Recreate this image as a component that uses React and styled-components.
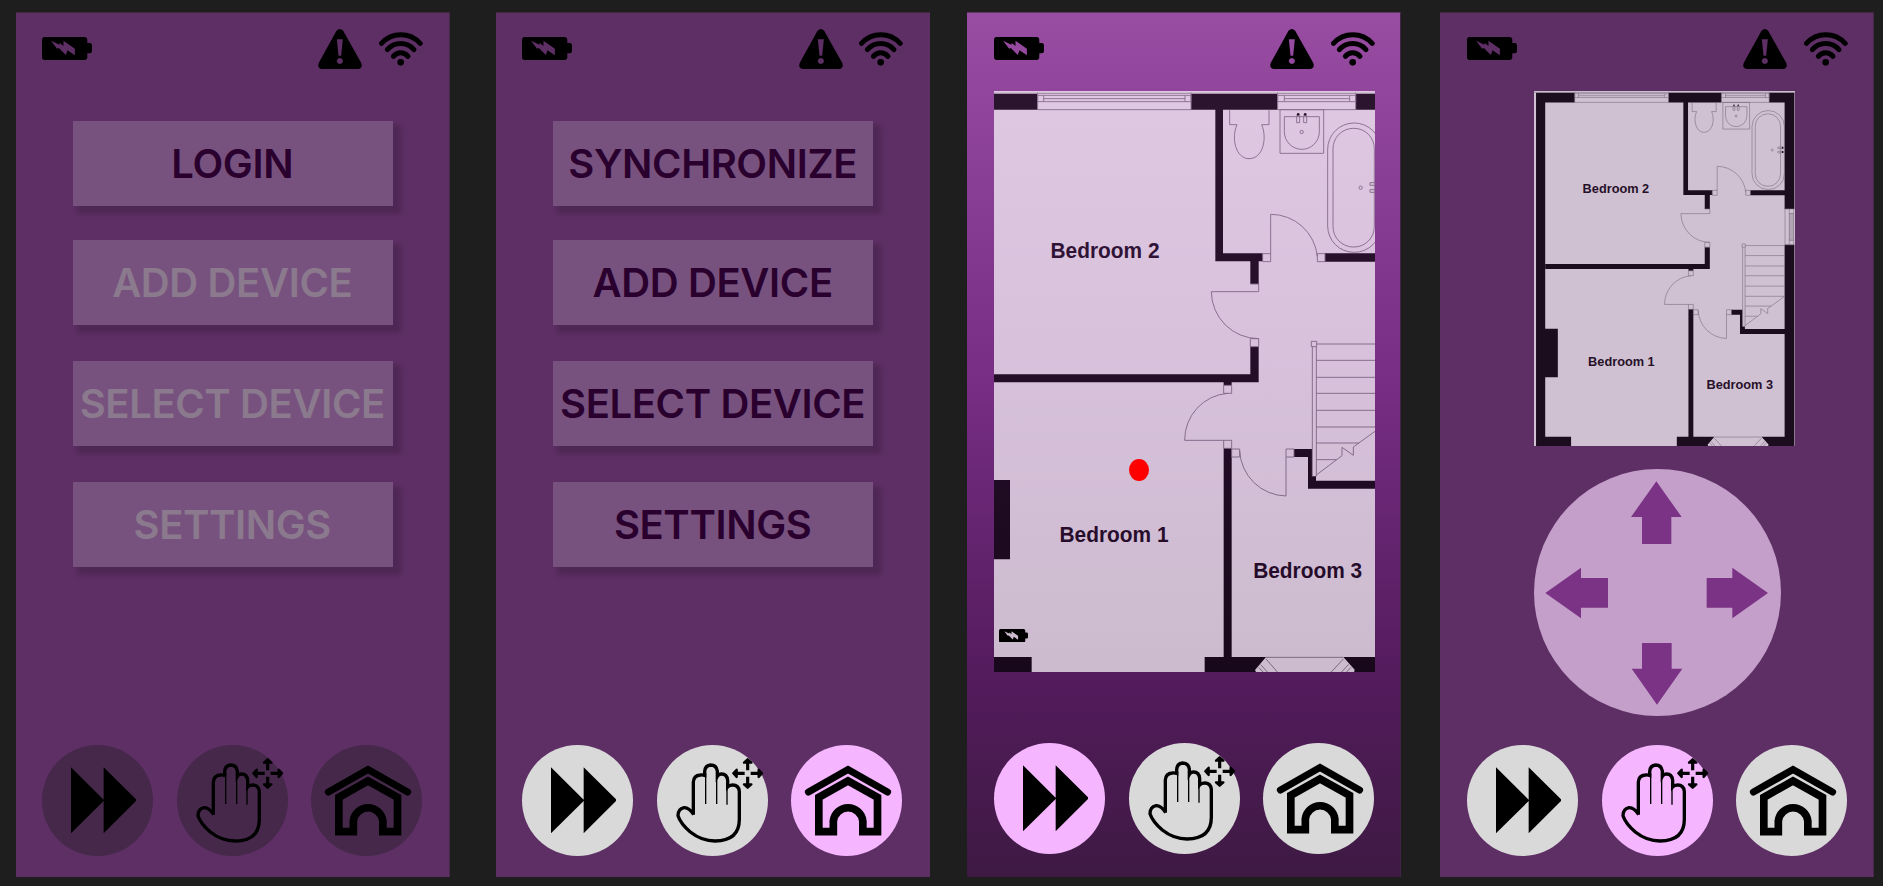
import React from "react";
import styled, { createGlobalStyle } from "styled-components";

const GlobalStyle = createGlobalStyle`
  *, *::before, *::after { box-sizing: border-box; }
  body { margin: 0; background: #1e1e1e; overflow: hidden; }
`;

const Board = styled.main`
  display: flex;
  align-items: flex-start;
  height: 886px;
  padding: 12px 0 0 16px;
  background: #1e1e1e;
`;

const Phone = styled.section`
  display: flex;
  flex-direction: column;
  flex: none;
  width: 434px;
  height: 865px;
  margin-right: ${(p) => p.$gap || 0}px;
  padding: 16px 0 ${(p) => p.$bottom || 21}px ${(p) => p.$inset || 26}px;
  border-top: 1px solid ${(p) => (p.$gradient ? "#5d3663" : "#40283f")};
  border-right: ${(p) => (p.$crisp ? 0 : 1)}px solid ${(p) => (p.$gradient ? "#3f2445" : "#452a49")};
  background: ${(p) =>
    p.$gradient
      ? "linear-gradient(180deg, #984da3 0%, #7a2f87 40%, #531b5c 77%, #3e1a43 100%)"
      : "#5e2f65"};
  background-clip: padding-box;
`;

const StatusBar = styled.header`
  display: flex;
  align-items: center;
  flex: none;
  width: 381px;
  height: 40px;
  svg { display: block; }
  > svg { margin-bottom: 1px; }
`;

const Alerts = styled.div`
  display: flex;
  align-items: center;
  gap: 16.7px;
  margin-left: auto;
`;

const Menu = styled.div`
  display: flex;
  flex-direction: column;
  gap: 36px;
  width: 320px;
  margin: 52px 0 0 31px;
`;

const MenuButton = styled.button`
  display: flex;
  align-items: center;
  justify-content: center;
  height: 85px;
  padding: 0 1.5px 0 0;
  border: 0;
  background: #78527e;
  box-shadow: 6px 6px 5px 2px rgba(0, 0, 0, 0.17);
  color: #2a002e;
  font: 600 40px/1 Inter, sans-serif;
  letter-spacing: -0.37px;
  white-space: nowrap;
  &:first-child { margin-bottom: -2px; }
  &:disabled { color: #8b7a8e; }
`;

const Nav = styled.nav`
  display: flex;
  gap: 23.5px;
  margin-top: auto;
`;

const circleColors = { off: "#45284a", idle: "#d9d9d9", active: "#f5b5ff" };

const NavButton = styled.button`
  width: 111px;
  height: 111px;
  padding: 0;
  border: 0;
  border-radius: 50%;
  background: ${(p) => circleColors[p.$state]};
  svg { display: block; overflow: visible; }
`;

const PlanFrame = styled.div`
  position: relative;
  width: ${(p) => p.$w}px;
  height: ${(p) => p.$h}px;
  margin: 22px 0 0 ${(p) => p.$left || 0}px;
  > svg { display: block; }
`;

const Marker = styled.span`
  position: absolute;
  left: 134.5px;
  top: 368px;
  width: 20px;
  height: 22px;
  border-radius: 50%;
  background: #ff0000;
`;

const DockBadge = styled.span`
  position: absolute;
  left: 5px;
  top: 537.5px;
  svg { display: block; }
`;

const Pad = styled.div`
  width: 247px;
  height: 247px;
  margin: 23px 0 0 67px;
  border-radius: 50%;
  background: #c49fca;
  svg { display: block; }
`;

const Battery = ({ width = 50, height = 23 }) => (
  <svg width={width} height={height} viewBox="126 111 149 69" preserveAspectRatio="none">
    <path
      fillRule="evenodd"
      d="M134 111H252Q261 111 261 120V129H268Q275 129 275 136V153Q275 160 268 160H261V171Q261 180 252 180H134Q126 180 126 171V120Q126 111 134 111ZM153 122L171 146L176 144L197 165L202 151L224 166V146L190 122V138L179 129L178 134Z"
    />
  </svg>
);

const Warning = () => (
  <svg width="44" height="40" viewBox="954.5 87 132 120">
    <path
      fillRule="evenodd"
      d="M1010 92Q1020 82 1030 92L1084 188Q1090 204 1076 207H965Q951 204 957 188ZM1011 118L1016 167H1024L1029 118ZM1020 174a9 9 0 1 0 .1 0Z"
    />
  </svg>
);

const Wifi = () => (
  <svg width="44" height="34" viewBox="1137 96 132 102">
    <g fill="none" stroke="#000" strokeWidth="15" strokeLinecap="round">
      <path d="M1144.500 130A78 78 0 0 1 1260.500 130" />
      <path d="M1162 149A53 53 0 0 1 1242 149" />
      <path d="M1180 169A28 28 0 0 1 1224 169" />
    </g>
    <circle cx="1202" cy="187" r="10" />
  </svg>
);

const Forward = () => (
  <svg width="111" height="111" viewBox="126 75 333 333">
    <path d="M213 142L311 239V142L408 238V243L311 340V243L213 340Z" />
  </svg>
);

const Hand = () => (
  <svg width="111" height="111" viewBox="530 75 333 333">
    <path
      fill="none"
      stroke="#000"
      strokeWidth="10"
      d="M640 284Q626 262 611 263Q593 267 593 287C599 306 622 329 630 336Q664 363 704 363C754 363 777 340 777 298V214Q775 195 757 195Q747 195 742 201V181Q740 162 724 162Q715 162 711 169V153Q708 135 691 135Q674 136 673 155V166Q667 164 660 165Q640 167 639 186V284"
    />
    <path fill="none" stroke="#000" strokeWidth="4" d="M676 160V252M709 160V252M740 186V254" />
    <path fill="none" stroke="#000" strokeWidth="9.500" d="M802 124V151M802 170V198M766 160H793M811 160H838" />
    <path
      stroke="#000"
      strokeWidth="7"
      strokeLinejoin="round"
      d="M802 118L813 128H791ZM802 203L813 193H791ZM759 160L769 149V171ZM845 160L835 149V171Z"
    />
  </svg>
);

const House = () => (
  <svg width="111" height="111" viewBox="933 75 333 333">
    <g fill="none" stroke="#000">
      <path strokeWidth="21.500" strokeLinecap="round" d="M985.500 216L1104 148.500L1222.500 216" />
      <path
        strokeWidth="23"
        d="M1016.500 335V232L1104 182.500L1192.500 232V335H1148.500V303A44.500 44.500 0 0 0 1060 303V335Z"
      />
    </g>
  </svg>
);

const FloorPlan = ({ width, height, viewBox }) => (
  <svg width={width} height={height} viewBox={viewBox} preserveAspectRatio="none" opacity="0.7">
    <rect x="33" y="273" width="1281" height="1745" fill="#fff" />
    <g fill="#000">
      <path d="M43 282H233V329H88V1440H150V1678H88V1971H215V2018H43Z" />
      <path d="M693 282H953V329H789V760H908V784H896V852H871V784H766V329H693Z" />
      <path d="M1187 282H1311V852H1263V785H1095V760H1263V329H1187Z" />
      <path d="M871 1040H896V1147H815V1156H791V1147H88V1123H871Z" />
      <path d="M1002 1347H1056V1429H1068V1442H1263V1028H1311V2018H1182L1184 2009L1150 1971H1263V1466H1044V1371H1002Z" />
      <path d="M791 1345H815V1971H918L885 2010L889 2018H734V1971H791Z" />
    </g>
    <g fill="none" stroke="#868088" strokeWidth="2.800">
      <path d="M33 280H1314M233 277V329M693 277V329M953 277V329M1187 277V329" stroke="#999" />
      <path d="M233 329H693M953 329H1187M251 296H675M233 286H693V305H233ZM251 286V305M675 286V305M973 296H1169M953 286H1187V305H953ZM973 286V305M1169 286V305" />
      <path d="M809 329V374H831C813 414 827 476 867 476C910 476 922 414 905 374H927V329" />
      <path d="M960 329H1091V460H960ZM973 350H1078V395A52.500 53 0 0 1 973 395Z" />
      <path d="M1010 347H1019V368H1010ZM1031 347H1040V368H1031Z" />
      <circle cx="1025" cy="396" r="5" />
      <rect x="1103" y="369" width="159" height="388" rx="79" />
      <rect x="1119" y="385" width="124" height="356" rx="61" />
      <circle cx="1202" cy="563" r="5" />
      <path d="M1230 548H1250V556H1230ZM1230 569H1250V577H1230Z" />
      <path d="M908 761H932V785H908ZM932 761V643A140 140 0 0 1 1072 770M1072 761H1095V785H1072Z" />
      <path d="M871 852H896V875H754A142 142 0 0 0 896 1016M871 1016H896V1040H871Z" />
      <path d="M791 1156H815V1180H791ZM803 1180A140 140 0 0 0 674 1321H815V1345H791V1321" />
      <path d="M815 1347H839V1371H815ZM839 1352A142 142 0 0 0 978 1488V1347H1002V1371H978" />
      <path d="M1054 1024H1070V1040H1054ZM1057 1040V1429M1069 1040V1429M1070 1032H1263M1069 1081H1263M1069 1132H1263M1069 1180H1263M1069 1231H1263M1069 1281H1263M1069 1329H1197M1069 1379H1130" />
      <path d="M1069 1425L1146 1367V1342L1180 1366V1341L1263 1281" />
      <path d="M1263 852H1311M1263 1028H1311M1265 852V1028M1286 852V1028M1307 852V1028M1286 874H1307M1286 1006H1307" />
      <path d="M918 1972H1150M918 1977L954 2018M1150 1977L1112 2018M902 1994L924 2018M896 2002L911 2018M1166 1993L1143 2018M1173 2002L1158 2018" />
    </g>
    <rect x="1286" y="874" width="21" height="132" fill="#000" opacity="0.16" />
    <g fill="#000">
      <circle cx="1014.500" cy="343" r="4" />
      <circle cx="1035.500" cy="343" r="4" />
      <path d="M1250 547H1257V557H1250ZM1250 568H1257V578H1250Z" />
    </g>
    <g fill="#0c040e" fontFamily="'Liberation Sans', Arial, sans-serif" fontWeight="700" fontSize="66">
      <text x="271.500" y="775" textLength="327" lengthAdjust="spacingAndGlyphs">Bedroom 2</text>
      <text x="298.500" y="1625" textLength="327" lengthAdjust="spacingAndGlyphs">Bedroom 1</text>
      <text x="879.500" y="1734" textLength="327" lengthAdjust="spacingAndGlyphs">Bedroom 3</text>
    </g>
  </svg>
);

const Status = () => (
  <StatusBar>
    <Battery />
    <Alerts>
      <Warning />
      <Wifi />
    </Alerts>
  </StatusBar>
);

const BottomNav = ({ active, disabled }) => {
  const state = (name) => (disabled ? "off" : name === active ? "active" : "idle");
  return (
    <Nav>
      <NavButton $state={state("forward")} aria-label="Forward"><Forward /></NavButton>
      <NavButton $state={state("move")} aria-label="Move"><Hand /></NavButton>
      <NavButton $state={state("home")} aria-label="Home"><House /></NavButton>
    </Nav>
  );
};

const DirectionPad = () => (
  <Pad>
    <svg width="247" height="247" viewBox="312 87 741 741" fill="#7b3485">
      <path d="M679 124L755 231H724V312H636V231H603Z" />
      <path d="M346 459L453 383V414H534V503H453V535Z" />
      <path d="M1014 459L907 383V414H830V503H907V535Z" />
      <path d="M681 794L605 686H636V609H725V686H757Z" />
    </svg>
  </Pad>
);

export default function App() {
  return (
    <>
      <GlobalStyle />
      <Board>
        <Phone $gap={46}>
          <Status />
          <Menu>
            <MenuButton>LOGIN</MenuButton>
            <MenuButton disabled>ADD DEVICE</MenuButton>
            <MenuButton disabled>SELECT DEVICE</MenuButton>
            <MenuButton disabled>SETTINGS</MenuButton>
          </Menu>
          <BottomNav disabled />
        </Phone>
        <Phone $gap={37} $crisp $inset={26.4}>
          <Status />
          <Menu>
            <MenuButton>SYNCHRONIZE</MenuButton>
            <MenuButton>ADD DEVICE</MenuButton>
            <MenuButton>SELECT DEVICE</MenuButton>
            <MenuButton>SETTINGS</MenuButton>
          </Menu>
          <BottomNav active="home" />
        </Phone>
        <Phone $gap={39} $gradient $inset={27} $bottom={23}>
          <Status />
          <PlanFrame $w={381} $h={581}>
            <FloorPlan width={381} height={581} viewBox="102 273 1143 1743" />
            <Marker />
            <DockBadge><Battery width={29} height={13.5} /></DockBadge>
          </PlanFrame>
          <BottomNav active="forward" />
        </Phone>
        <Phone $inset={27}>
          <Status />
          <PlanFrame $w={261} $h={355} $left={67}>
            <FloorPlan width={261} height={355} viewBox="33 273 1281 1743" />
          </PlanFrame>
          <DirectionPad />
          <BottomNav active="move" />
        </Phone>
      </Board>
    </>
  );
}
